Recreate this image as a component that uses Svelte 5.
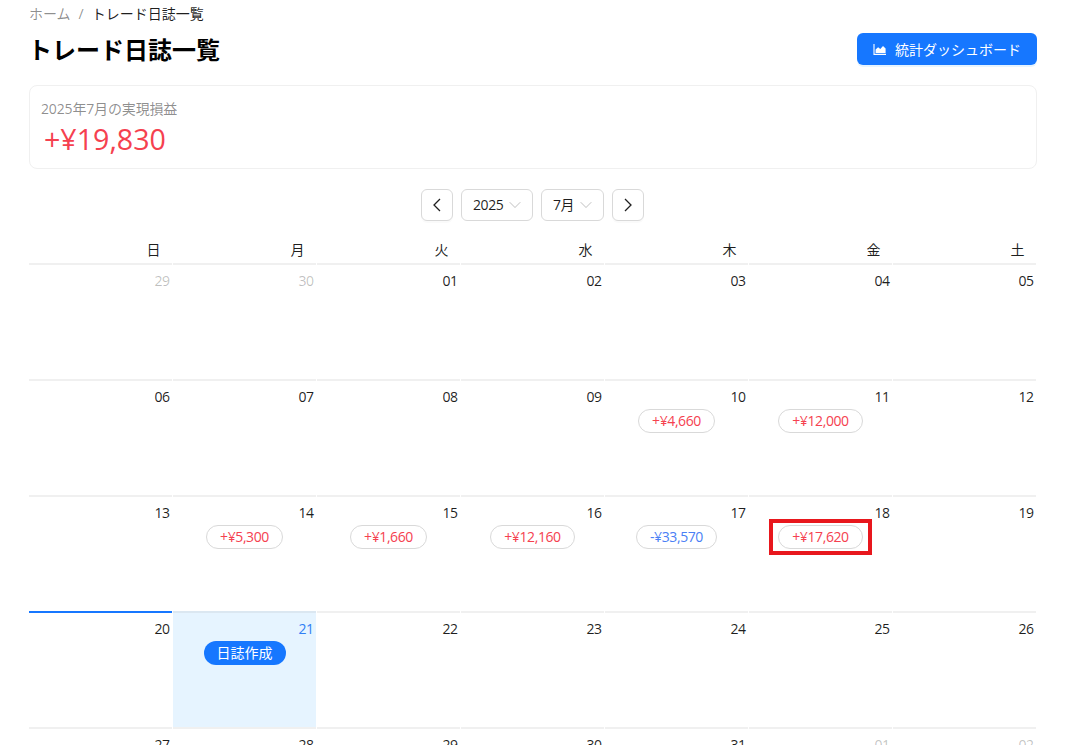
<script lang="ts">
  type Day = {
    label: string;
    muted?: boolean;
    today?: boolean;
    selected?: boolean;
    pnl?: string;
    loss?: boolean;
    marked?: boolean;
    create?: boolean;
  };

  const weekdays = ['日', '月', '火', '水', '木', '金', '土'];

  const days: Day[] = [
    { label: '29', muted: true },
    { label: '30', muted: true },
    { label: '01' },
    { label: '02' },
    { label: '03' },
    { label: '04' },
    { label: '05' },
    { label: '06' },
    { label: '07' },
    { label: '08' },
    { label: '09' },
    { label: '10', pnl: '+¥4,660' },
    { label: '11', pnl: '+¥12,000' },
    { label: '12' },
    { label: '13' },
    { label: '14', pnl: '+¥5,300' },
    { label: '15', pnl: '+¥1,660' },
    { label: '16', pnl: '+¥12,160' },
    { label: '17', pnl: '-¥33,570', loss: true },
    { label: '18', pnl: '+¥17,620', marked: true },
    { label: '19' },
    { label: '20', selected: true },
    { label: '21', today: true, create: true },
    { label: '22' },
    { label: '23' },
    { label: '24' },
    { label: '25' },
    { label: '26' },
    { label: '27' },
    { label: '28' },
    { label: '29' },
    { label: '30' },
    { label: '31' },
    { label: '01', muted: true },
    { label: '02', muted: true },
  ];
</script>

<div class="page">
  <nav class="crumbs" aria-label="breadcrumb">
    <span class="crumb-link">ホーム</span>
    <span class="crumb-sep">/</span>
    <span>トレード日誌一覧</span>
  </nav>

  <header class="head">
    <h1>トレード日誌一覧</h1>
    <button type="button" class="dash-btn">
      <svg viewBox="0 0 14 14" width="14" height="14" aria-hidden="true">
        <path d="M1 2v10.4h12" fill="none" stroke="currentColor" stroke-width="1.1" />
        <path d="M2.6 10.9V7.6l2.5-2.4 2.2 1.9L10 4l2.6 2.4v4.5z" fill="currentColor" />
      </svg>
      統計ダッシュボード
    </button>
  </header>

  <section class="summary">
    <div class="summary-label">2025年7月の実現損益</div>
    <div class="summary-value">+¥19,830</div>
  </section>

  <div class="controls">
    <button type="button" class="ctl square" aria-label="前月">
      <svg viewBox="0 0 14 14" width="14" height="14"><path d="M10 1 4 7l6 6" fill="none" stroke="currentColor" stroke-width="1.3" /></svg>
    </button>
    <div class="ctl select year">
      <span>2025</span>
      <svg viewBox="0 0 12 12" width="12" height="12"><path d="M.7 3.2 6 8.5l5.3-5.3" fill="none" stroke="currentColor" stroke-width="1" /></svg>
    </div>
    <div class="ctl select month">
      <span>7月</span>
      <svg viewBox="0 0 12 12" width="12" height="12"><path d="M.7 3.2 6 8.5l5.3-5.3" fill="none" stroke="currentColor" stroke-width="1" /></svg>
    </div>
    <button type="button" class="ctl square" aria-label="翌月">
      <svg viewBox="0 0 14 14" width="14" height="14"><path d="m4 1 6 6-6 6" fill="none" stroke="currentColor" stroke-width="1.3" /></svg>
    </button>
  </div>

  <div class="calendar">
    {#each weekdays as day}
      <div class="weekday">{day}</div>
    {/each}
    {#each days as day}
      <div class="cell" class:today={day.today} class:selected={day.selected}>
        <div class="date" class:muted={day.muted}>{day.label}</div>
        <div class="content">
          {#if day.pnl}
            <span class="pnl" class:loss={day.loss} class:marked={day.marked}>{day.pnl}</span>
          {/if}
          {#if day.create}
            <button type="button" class="create">日誌作成</button>
          {/if}
        </div>
      </div>
    {/each}
  </div>
</div>

<style>
  :global(body) {
    margin: 0;
    background: #fff;
    overflow: hidden;
  }

  .page {
    box-sizing: border-box;
    width: 1074px;
    height: 745px;
    overflow: hidden;
    padding: 3px 37px 0 29px;
    color: rgba(0, 0, 0, 0.88);
    font-family: 'Open Sans', 'Noto Sans CJK JP', sans-serif;
    font-size: 14px;
  }

  .crumbs {
    display: flex;
    gap: 8px;
    height: 22px;
    line-height: 22px;
  }

  .crumb-link,
  .crumb-sep {
    color: rgba(0, 0, 0, 0.45);
  }

  .head {
    display: flex;
    align-items: center;
    justify-content: space-between;
    height: 32px;
    margin-top: 8px;
  }

  h1 {
    margin: 1px 0 0 -1px;
    color: #000;
    font-size: 24px;
    font-weight: 700;
    line-height: 32px;
  }

  .dash-btn {
    display: flex;
    align-items: center;
    justify-content: center;
    gap: 8px;
    width: 180px;
    height: 32px;
    padding: 0;
    border: 0;
    border-radius: 6px;
    background: #1677ff;
    color: #fff;
    font: inherit;
    box-shadow: 0 2px 0 rgba(5, 145, 255, 0.1);
  }

  .summary {
    box-sizing: border-box;
    height: 84px;
    margin-top: 20px;
    padding: 12px 11px;
    border: 1px solid #f0f0f0;
    border-radius: 8px;
  }

  .summary-label {
    color: rgba(0, 0, 0, 0.45);
    line-height: 22px;
    letter-spacing: -0.15px;
  }

  .summary-value {
    margin-top: 1px;
    padding-left: 3px;
    color: #f5414f;
    font-size: 28.6px;
    line-height: 36px;
  }

  .controls {
    display: flex;
    justify-content: center;
    gap: 8px;
    margin-top: 20px;
    padding-right: 1px;
  }

  .ctl {
    display: flex;
    align-items: center;
    box-sizing: border-box;
    height: 32px;
    border: 1px solid #d9d9d9;
    border-radius: 6px;
    background: #fff;
    color: rgba(0, 0, 0, 0.88);
    font: inherit;
  }

  .square {
    justify-content: center;
    width: 32px;
    padding: 0;
    box-shadow: 0 2px 0 rgba(0, 0, 0, 0.02);
  }

  .select {
    justify-content: space-between;
    padding: 0 11px;
  }

  .select span {
    margin-top: -2px;
    letter-spacing: -0.4px;
  }

  .select svg {
    color: rgba(0, 0, 0, 0.25);
  }

  .year {
    width: 72px;
  }

  .month {
    width: 63px;
  }

  .calendar {
    display: grid;
    grid-template-columns: repeat(7, 144px);
    margin-top: 18px;
  }

  .weekday {
    height: 24px;
    padding-right: 12.5px;
    text-align: right;
    line-height: 22px;
  }

  .cell {
    box-sizing: border-box;
    height: 116px;
    margin-right: 1px;
    border-top: 2px solid #f0f0f0;
    padding: 5px 2.5px 0 0;
  }

  .cell.selected {
    border-top-color: #1677ff;
  }

  .cell.today {
    background: #e6f4ff;
    border-top-color: #dbe7f1;
  }

  .date {
    height: 23px;
    text-align: right;
    line-height: 22px;
    letter-spacing: -0.5px;
  }

  .date.muted {
    color: rgba(0, 0, 0, 0.25);
  }

  .today .date {
    color: #2f7ff5;
  }

  .content {
    display: flex;
    justify-content: center;
    padding-left: 2.5px;
  }

  .pnl {
    position: relative;
    box-sizing: border-box;
    height: 24px;
    padding: 0 13px;
    border: 1px solid #d9d9d9;
    border-radius: 12px;
    background: #fff;
    color: #f5414f;
    line-height: 22px;
    white-space: nowrap;
    letter-spacing: -0.4px;
  }

  .pnl.loss {
    color: #4a80f5;
  }

  .pnl.marked::after {
    content: '';
    position: absolute;
    inset: -7px -10px -7px -10px;
    border: 4px solid #e8171d;
  }

  .create {
    height: 24px;
    padding: 0 13px;
    border: 0;
    border-radius: 12px;
    background: #1677ff;
    color: #fff;
    font: inherit;
    line-height: 24px;
  }
</style>
